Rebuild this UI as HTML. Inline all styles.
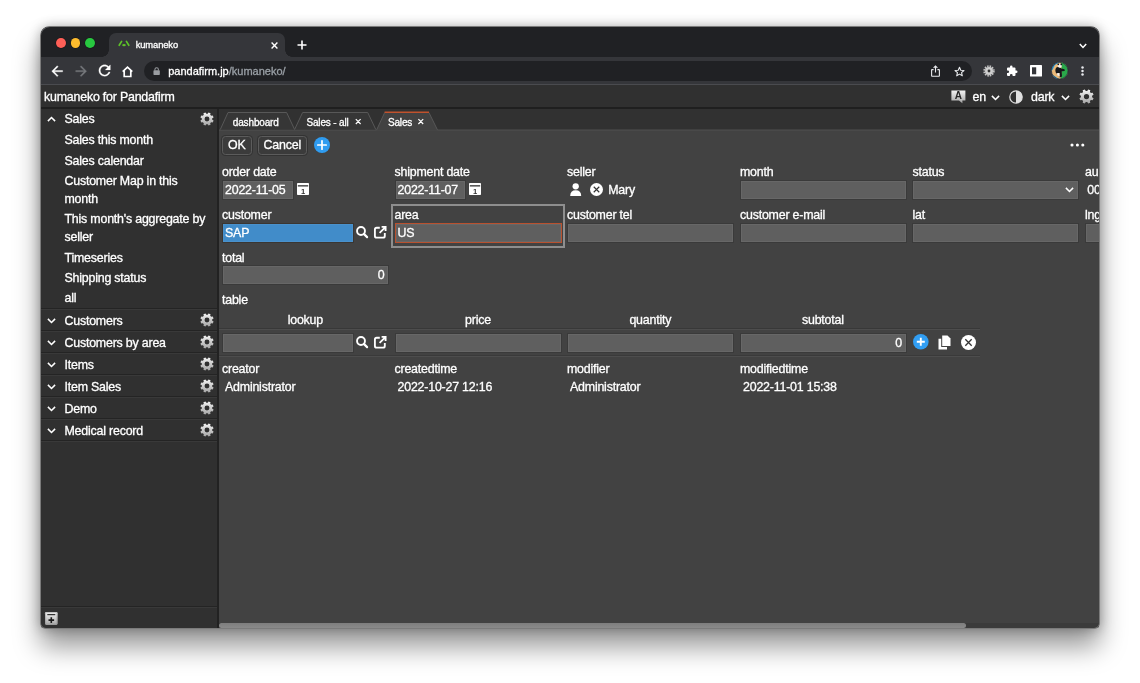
<!DOCTYPE html>
<html lang="en">
<head>
<meta charset="utf-8">
<title>kumaneko</title>
<style>
*{box-sizing:border-box;margin:0;padding:0}
html,body{width:1140px;height:683px;overflow:hidden;background:#fff}
body{font-family:"Liberation Sans",sans-serif;font-size:12.400px;color:#fff;position:relative;-webkit-text-stroke:0.3px currentColor}
.abs{position:absolute}
#win{will-change:transform;position:absolute;left:40px;top:26px;width:1060px;height:603px;border-radius:10px 10px 6px 6px;background:#424242;overflow:hidden}
#inner{position:absolute;left:1px;top:1px;width:1058px;height:601px}
#ring{position:absolute;left:0;top:0;width:1060px;height:603px;border-radius:10px 10px 6px 6px;box-shadow:inset 0 0 0 1px rgba(255,255,255,.3);pointer-events:none}
#shadow{position:absolute;left:40px;top:26px;width:1060px;height:603px;border-radius:10px 10px 6px 6px;
  box-shadow:0 18px 27px rgba(0,0,0,.40),0 0 12px rgba(0,0,0,.28)}
/* chrome */
#tabstrip{position:absolute;left:0;top:0;width:100%;height:30px;background:#202124}
#toolbar{position:absolute;left:0;top:30px;width:100%;height:28px;background:#35363a;border-bottom:1px solid #4a4b4f}
.tl{position:absolute;top:10.800px;width:9.800px;height:9.800px;border-radius:50%;box-shadow:0 0 0 0.500px rgba(0,0,0,.35)}
#ctab{position:absolute;left:67.700px;top:6px;width:176.300px;height:24px;background:#35363a;border-radius:7px 7px 0 0}
#ctab:before,#ctab:after{content:"";position:absolute;bottom:0;width:7px;height:7px;background:radial-gradient(circle at 0 0,transparent 6.5px,#35363a 7px)}
#ctab:before{left:-7px}
#ctab:after{right:-7px;background:radial-gradient(circle at 100% 0,transparent 6.5px,#35363a 7px)}
#urlbar{position:absolute;left:102.700px;top:4px;width:828.300px;height:20px;border-radius:10px;background:#202124}
.ctxt{font-size:9.400px;color:#fff;letter-spacing:-0.12px;white-space:nowrap}
.t{white-space:nowrap;line-height:16px;letter-spacing:-0.2px}
/* app */
#apphead{position:absolute;left:0;top:58px;width:100%;height:24px;background:#303030;border-bottom:2px solid #1f1f1f}
#side{position:absolute;left:0;top:82px;width:176px;height:519px;background:#303030}
#sep{position:absolute;left:176px;top:82px;width:2px;height:519px;background:#222}
#main{position:absolute;left:178px;top:82px;width:880px;height:519px;background:#424242;overflow:hidden}
.srow{position:absolute;left:0;width:176px;height:22px;border-top:1px solid #242424;box-shadow:inset 0 1px 0 #393939}
.stxt{position:absolute;left:23.5px;white-space:nowrap;line-height:16px}
.lbl{position:absolute;white-space:nowrap;line-height:16px}
.inp{position:absolute;height:20px;background:#5f5f5f;border:1px solid #3a3a3a;box-shadow:inset 0 0 0 1px rgba(255,255,255,.05);line-height:18px;padding:0 2px;white-space:nowrap}
svg{position:absolute;overflow:visible}
.tab{font-size:10px;line-height:12px;letter-spacing:-0.15px;white-space:nowrap}
.btn{position:absolute;height:18.500px;border:1px solid #5c5c5c;border-radius:3.500px;background:#3b3b3b;box-shadow:0 0 0 1px rgba(0,0,0,.22);text-align:center;line-height:16.500px;letter-spacing:-0.2px;white-space:nowrap}
</style>
</head>
<body>
<div id="shadow"></div>
<div id="win">
<div id="inner">
  <!-- ===== browser tab strip ===== -->
  <div id="tabstrip">
    <div class="tl" style="left:15px;background:#fe5f57"></div>
    <div class="tl" style="left:29.600px;background:#febc2e"></div>
    <div class="tl" style="left:44.400px;background:#28c840"></div>
    <div id="ctab">
      <svg style="left:9.200px;top:7.200px" width="12" height="7" viewBox="0 0 12 7"><path d="M1.2 5.3 L3.6 1.4 M8.400 1.400 L10.800 5.300" stroke="#5dc229" stroke-width="1.700" stroke-linecap="round" fill="none"/><ellipse cx="6" cy="5.200" rx="1.800" ry="1.100" fill="#5dc229"/></svg>
      <span class="abs ctxt" style="left:27px;top:6.300px;line-height:12px">kumaneko</span>
      <svg style="left:162.700px;top:8.500px" width="7" height="7" viewBox="0 0 7 7"><path d="M0.6 0.6 L6.4 6.4 M6.4 0.6 L0.6 6.4" stroke="#fff" stroke-width="1.4" fill="none"/></svg>
    </div>
    <svg style="left:255.5px;top:13px" width="10" height="10" viewBox="0 0 10 10"><path d="M5 0.5 V9.5 M0.5 5 H9.5" stroke="#fff" stroke-width="1.6" fill="none"/></svg>
    <svg style="left:1037.5px;top:15.5px" width="8" height="6" viewBox="0 0 8 6"><path d="M0.8 1 L4 4.4 L7.2 1" stroke="#fff" stroke-width="1.5" fill="none"/></svg>
  </div>
  <!-- ===== browser toolbar ===== -->
  <div id="toolbar">
    <svg style="left:7.820px;top:5.620px" width="16.350" height="16.350" viewBox="0 0 24 24"><path d="M20 11H7.830l5.590-5.590L12 4l-8 8 8 8 1.410-1.410L7.830 13H20v-2z" fill="#fff" stroke="#fff" stroke-width="0.500"/></svg>
    <svg style="left:31.870px;top:5.620px" width="16.350" height="16.350" viewBox="0 0 24 24"><path d="M12 4l-1.410 1.410L16.170 11H4v2h12.170l-5.580 5.590L12 20l8-8z" fill="#75777b" stroke="#75777b" stroke-width="0.500"/></svg>
    <svg style="left:54.900px;top:5.400px" width="17.200" height="17.200" viewBox="0 0 24 24"><path d="M17.650 6.350C16.200 4.900 14.210 4 12 4c-4.420 0-7.990 3.580-7.990 8s3.570 8 7.990 8c3.730 0 6.840-2.550 7.730-6h-2.080c-.820 2.330-3.040 4-5.650 4-3.310 0-6-2.690-6-6s2.690-6 6-6c1.660 0 3.140.690 4.220 1.780L13 11h7V4l-2.350 2.350z" fill="#fff" stroke="#fff" stroke-width="0.400"/></svg>
    <svg style="left:81.300px;top:8.600px" width="11" height="12" viewBox="0 0 11 12"><path d="M0.700 5.700 L5.500 1.200 L10.300 5.700 M2.200 4.600 V10.500 H8.800 V4.600" stroke="#fff" stroke-width="1.700" fill="none" stroke-linejoin="miter"/></svg>
    <div id="urlbar"></div>
    <svg style="left:112.300px;top:9.600px" width="7.300" height="8.300" viewBox="0 0 8 9"><rect x="0.5" y="3.6" width="7" height="5.2" rx="0.8" fill="#9a9da1"/><path d="M2.1 3.8 V2.6 A1.9 1.9 0 0 1 5.9 2.6 V3.8" stroke="#9a9da1" stroke-width="1.1" fill="none"/></svg>
    <span class="abs" style="left:127.200px;top:7.500px;line-height:13px;font-size:11px;white-space:nowrap">pandafirm.jp<span style="color:#9aa0a6">/kumaneko/</span></span>
    <!-- share -->
    <svg style="left:890px;top:8px" width="9" height="12" viewBox="0 0 9 12"><path d="M2.6 4.6 H1 Q0.6 4.6 0.6 5 V10.8 Q0.6 11.2 1 11.2 H8 Q8.4 11.2 8.4 10.8 V5 Q8.4 4.6 8 4.6 H6.4" stroke="#e8eaed" stroke-width="1.1" fill="none"/><path d="M4.5 7.6 V1.2 M2.6 2.9 L4.5 1 L6.4 2.9" stroke="#e8eaed" stroke-width="1.1" fill="none"/></svg>
    <!-- star -->
    <svg style="left:912.5px;top:8.5px" width="11" height="11" viewBox="0 0 24 24"><path d="M12 2.8 L14.8 9.3 L21.8 9.9 L16.5 14.5 L18.1 21.4 L12 17.7 L5.9 21.4 L7.5 14.5 L2.2 9.9 L9.2 9.3 Z" stroke="#e8eaed" stroke-width="2.4" fill="none" stroke-linejoin="round"/></svg>
    <!-- ext gear -->
    <svg style="left:941.7px;top:7.8px" width="12" height="12" viewBox="0 0 12 12"><circle cx="6" cy="6" r="4.700" fill="none" stroke="#c4c4c4" stroke-width="2" stroke-dasharray="1.500 0.960"/><circle cx="6" cy="6" r="4" fill="#cfcfcf"/><circle cx="6" cy="6" r="1.400" fill="#333"/></svg>
    <!-- puzzle -->
    <svg style="left:965.4px;top:7.6px" width="12" height="12" viewBox="0 0 24 24"><path d="M20.5 11H19V7a2 2 0 0 0-2-2h-4V3.5a2.5 2.5 0 0 0-5 0V5H4a2 2 0 0 0-2 2v3.8h1.5a2.7 2.7 0 0 1 0 5.4H2V20a2 2 0 0 0 2 2h3.8v-1.5a2.7 2.7 0 0 1 5.4 0V22H17a2 2 0 0 0 2-2v-4h1.500a2.500 2.500 0 0 0 0-5z" fill="#fff"/></svg>
    <!-- side panel -->
    <svg style="left:988.5px;top:7.8px" width="12" height="11.600" viewBox="0 0 12 11.600"><rect x="0" y="0" width="12" height="11.600" rx="0.600" fill="#fff"/><rect x="2" y="2.300" width="4.200" height="7" fill="#35363a"/></svg>
    <!-- avatar -->
    <svg style="left:1009.5px;top:4.9px" width="17.400" height="17.400" viewBox="0 0 17.400 17.400"><defs><clipPath id="av"><circle cx="8.700" cy="8.700" r="8.400"/></clipPath></defs><g clip-path="url(#av)"><rect width="17.400" height="17.400" fill="#e9b878"/><path d="M0 0 H9 L4 3 L1.500 8 L0 9 Z" fill="#2a9bd8"/><path d="M10 0 H17.400 V17.400 H9.500 L11 11 Z" fill="#2aa84a"/><path d="M0 12 L5 15 L8 17.400 H0 Z" fill="#2a9bd8"/><path d="M4.500 7 Q5 4.500 8 5 L10.500 6.500 L13.500 7.200 L13.800 9 L10.800 9.300 L11 14.500 L8.800 15.800 L8.500 11 L5.500 11.500 Q4 10 4.500 7 Z" fill="#15171a"/><circle cx="8.800" cy="3.700" r="2" fill="#f3f3f3"/><circle cx="7.300" cy="2.300" r="0.900" fill="#15171a"/><circle cx="10.300" cy="2.400" r="0.900" fill="#15171a"/><path d="M6 11.300 L8.400 11 L8.600 14 L6.500 13.500 Z" fill="#f3f3f3"/></g><circle cx="8.700" cy="8.700" r="8.300" fill="none" stroke="#1d2a3a" stroke-width="0.700"/></svg>
    <!-- kebab -->
    <svg style="left:1039.9px;top:9.2px" width="3" height="10" viewBox="0 0 3 10"><circle cx="1.500" cy="1.400" r="1.250" fill="#e8eaed"/><circle cx="1.500" cy="5" r="1.250" fill="#e8eaed"/><circle cx="1.500" cy="8.600" r="1.250" fill="#e8eaed"/></svg>
  </div>
  <!-- ===== app header ===== -->
  <div id="apphead">
    <span class="abs t" style="left:3px;top:3.500px">kumaneko for Pandafirm</span>
    <!-- translate icon -->
    <svg style="left:909.500px;top:4.800px" width="14.800" height="13.500" viewBox="0 0 14.800 13.500"><path d="M0.400 0.400 H14.400 V10.400 H11.400 V13.200 L8 10.400 H0.400 Z" fill="url(#gg)"/><text x="7.400" y="9.300" font-family="Liberation Sans, sans-serif" font-size="10" font-weight="bold" text-anchor="middle" fill="#262626" style="-webkit-text-stroke:0">A</text></svg>
    <span class="abs t" style="left:931.500px;top:3.500px">en</span>
    <svg class="chev" style="left:949.500px;top:9.500px" width="9" height="6" viewBox="0 0 9 6"><path d="M0.900 0.900 L4.500 4.500 L8.100 0.900" stroke="#fff" stroke-width="1.500" fill="none"/></svg>
    <svg style="left:968px;top:5px" width="14" height="14" viewBox="0 0 14 14"><circle cx="7" cy="7" r="6.200" fill="none" stroke="#e0e0e0" stroke-width="1.200"/><path d="M7 0.800 A6.200 6.200 0 0 1 7 13.200 Z" fill="#e0e0e0"/></svg>
    <span class="abs t" style="left:990px;top:3.500px">dark</span>
    <svg class="chev" style="left:1019.800px;top:9.500px" width="9" height="6" viewBox="0 0 9 6"><path d="M0.900 0.900 L4.500 4.500 L8.100 0.900" stroke="#fff" stroke-width="1.500" fill="none"/></svg>
    <svg style="left:1037.800px;top:4.300px" width="15" height="15" viewBox="0 0 24 24"><use href="#gear" fill="url(#gg)"/></svg>
  </div>
  <div id="side">
    <svg class="chev" style="left:6px;top:6.5px" width="9" height="6" viewBox="0 0 9 6"><path d="M0.900 5.100 L4.500 1.500 L8.100 5.100" stroke="#fff" stroke-width="1.500" fill="none"/></svg>
    <span class="stxt t" style="top:2px">Sales</span>
    <svg style="left:159px;top:2.5px" width="14" height="14" viewBox="0 0 24 24"><use href="#gear" fill="url(#gg)"/></svg>
    <span class="stxt t" style="top:23px">Sales this month</span>
    <span class="stxt t" style="top:44px">Sales calendar</span>
    <span class="stxt t" style="top:64px">Customer Map in this</span>
    <span class="stxt t" style="top:82px">month</span>
    <span class="stxt t" style="top:102px">This month's aggregate by</span>
    <span class="stxt t" style="top:120px">seller</span>
    <span class="stxt t" style="top:141px">Timeseries</span>
    <span class="stxt t" style="top:161px">Shipping status</span>
    <span class="stxt t" style="top:181px">all</span>
    <div class="srow" style="top:199.0px">
      <svg class="chev" style="left:6px;top:8.500px" width="9" height="6" viewBox="0 0 9 6"><path d="M0.900 0.900 L4.500 4.500 L8.100 0.900" stroke="#fff" stroke-width="1.500" fill="none"/></svg>
      <span class="stxt t" style="top:3.500px">Customers</span>
      <svg style="left:159px;top:3.500px" width="14" height="14" viewBox="0 0 24 24"><use href="#gear" fill="url(#gg)"/></svg>
    </div>
    <div class="srow" style="top:221.0px">
      <svg class="chev" style="left:6px;top:8.500px" width="9" height="6" viewBox="0 0 9 6"><path d="M0.900 0.900 L4.500 4.500 L8.100 0.900" stroke="#fff" stroke-width="1.500" fill="none"/></svg>
      <span class="stxt t" style="top:3.500px">Customers by area</span>
      <svg style="left:159px;top:3.500px" width="14" height="14" viewBox="0 0 24 24"><use href="#gear" fill="url(#gg)"/></svg>
    </div>
    <div class="srow" style="top:243.0px">
      <svg class="chev" style="left:6px;top:8.500px" width="9" height="6" viewBox="0 0 9 6"><path d="M0.900 0.900 L4.500 4.500 L8.100 0.900" stroke="#fff" stroke-width="1.500" fill="none"/></svg>
      <span class="stxt t" style="top:3.500px">Items</span>
      <svg style="left:159px;top:3.500px" width="14" height="14" viewBox="0 0 24 24"><use href="#gear" fill="url(#gg)"/></svg>
    </div>
    <div class="srow" style="top:265.0px">
      <svg class="chev" style="left:6px;top:8.500px" width="9" height="6" viewBox="0 0 9 6"><path d="M0.900 0.900 L4.500 4.500 L8.100 0.900" stroke="#fff" stroke-width="1.500" fill="none"/></svg>
      <span class="stxt t" style="top:3.500px">Item Sales</span>
      <svg style="left:159px;top:3.500px" width="14" height="14" viewBox="0 0 24 24"><use href="#gear" fill="url(#gg)"/></svg>
    </div>
    <div class="srow" style="top:287.0px">
      <svg class="chev" style="left:6px;top:8.500px" width="9" height="6" viewBox="0 0 9 6"><path d="M0.900 0.900 L4.500 4.500 L8.100 0.900" stroke="#fff" stroke-width="1.500" fill="none"/></svg>
      <span class="stxt t" style="top:3.500px">Demo</span>
      <svg style="left:159px;top:3.500px" width="14" height="14" viewBox="0 0 24 24"><use href="#gear" fill="url(#gg)"/></svg>
    </div>
    <div class="srow" style="top:309.0px">
      <svg class="chev" style="left:6px;top:8.500px" width="9" height="6" viewBox="0 0 9 6"><path d="M0.900 0.900 L4.500 4.500 L8.100 0.900" stroke="#fff" stroke-width="1.500" fill="none"/></svg>
      <span class="stxt t" style="top:3.500px">Medical record</span>
      <svg style="left:159px;top:3.500px" width="14" height="14" viewBox="0 0 24 24"><use href="#gear" fill="url(#gg)"/></svg>
    </div>
    <div class="srow" style="top:331.0px;height:2px"></div>
    <div class="srow" style="top:497px;height:2px"></div>
    <svg style="left:4.400px;top:502.800px" width="12.600" height="12.900" viewBox="0 0 12.600 12.900"><rect x="0" y="0" width="12.600" height="12.900" rx="1.300" fill="url(#gg)"/><rect x="0.600" y="0.600" width="11.400" height="11.700" rx="0.800" fill="none" stroke="#8a8a8a" stroke-width="0.500"/><rect x="2.300" y="2.100" width="8" height="1.100" fill="#1e1e1e"/><path d="M6.300 5.300 V10.900 M3.500 8.100 H9.100" stroke="#1a1a1a" stroke-width="1.600"/></svg>
  </div>
  <div id="sep"></div>
  <div id="main">
    <div class="abs" style="left:0;top:0;width:880px;height:20.500px;background:#313131"></div>
    <svg style="left:0;top:0" width="880" height="22" viewBox="219 109 880 22">
      <path d="M219 130 H1099" stroke="#505050" stroke-width="1"/>
      <path d="M220.300 129.500 L228 112.500 H286.600 L294.600 129.500" fill="#363636" stroke="#585858" stroke-width="1"/>
      <path d="M294.600 129.500 L302.600 112.500 H367.700 L375.800 129.500" fill="#363636" stroke="#585858" stroke-width="1"/>
      <path d="M376.500 130.600 L384.700 112.500 H428.900 L437.500 130.600 Z" fill="#424242"/>
      <path d="M376.700 129.800 L384.700 112.500 M428.900 112.500 L437.400 129.800" fill="none" stroke="#585858" stroke-width="1"/>
      <path d="M384.600 112.200 H429" stroke="#c0522d" stroke-width="1.500"/>
      <path d="M355.800 119.200 L360.600 124 M360.600 119.200 L355.800 124 M418.400 119.200 L423.200 124 M423.200 119.200 L418.400 124" stroke="#fff" stroke-width="1.200"/>
    </svg>
    <span class="abs tab" style="left:13.8px;top:7.500px">dashboard</span>
    <span class="abs tab" style="left:87.4px;top:7.500px">Sales - all</span>
    <span class="abs tab" style="left:168.9px;top:7.500px">Sales</span>
    <div class="btn" style="left:3px;top:27px;width:29.5px">OK</div>
    <div class="btn" style="left:38.8px;top:27px;width:49px">Cancel</div>
    <svg style="left:95px;top:28.3px" width="16" height="16" viewBox="0 0 16 16"><circle cx="8" cy="8" r="8" fill="#2f9cf0"/><path d="M8 3.800 V12.200 M3.800 8 H12.200" stroke="#fff" stroke-width="1.700" stroke-linecap="round"/></svg>
    <svg style="left:851.400px;top:34.300px" width="15" height="4" viewBox="0 0 15 4"><circle cx="2" cy="2" r="1.550" fill="#fff"/><circle cx="7.400" cy="2" r="1.550" fill="#fff"/><circle cx="12.800" cy="2" r="1.550" fill="#fff"/></svg>
    <span class="lbl t" style="left:3px;top:55.4px">order date</span>
    <span class="lbl t" style="left:175.5px;top:55.4px">shipment date</span>
    <span class="lbl t" style="left:348px;top:55.4px">seller</span>
    <span class="lbl t" style="left:521px;top:55.4px">month</span>
    <span class="lbl t" style="left:693.5px;top:55.4px">status</span>
    <span class="lbl t" style="left:866px;top:55.4px">au</span>
    <div class="inp t" style="left:3px;top:71px;width:71.500px;">2022-11-05</div>
    <svg style="left:77.7px;top:74.3px" width="12" height="12" viewBox="0 0 12 12"><rect x="0" y="0" width="12" height="12" rx="0.800" fill="#fff"/><rect x="0.800" y="2.200" width="10.400" height="1.300" fill="#333"/><text x="6" y="10.500" font-family="Liberation Sans, sans-serif" font-size="7.600" font-weight="bold" text-anchor="middle" fill="#333">1</text></svg>
    <div class="inp t" style="left:175.5px;top:71px;width:71.500px;">2022-11-07</div>
    <svg style="left:250.2px;top:74.3px" width="12" height="12" viewBox="0 0 12 12"><rect x="0" y="0" width="12" height="12" rx="0.800" fill="#fff"/><rect x="0.800" y="2.200" width="10.400" height="1.300" fill="#333"/><text x="6" y="10.500" font-family="Liberation Sans, sans-serif" font-size="7.600" font-weight="bold" text-anchor="middle" fill="#333">1</text></svg>
    <svg style="left:351.300px;top:73.700px" width="11.400" height="13.300" viewBox="0 0 11.400 13.300"><circle cx="5.700" cy="3.300" r="3.150" fill="#fff"/><path d="M0.200 13.100 Q0.200 7.300 5.700 7.300 Q11.200 7.300 11.200 13.100 Z" fill="#fff"/></svg>
    <svg style="left:371.2px;top:74.1px" width="13" height="13" viewBox="0 0 16 16"><circle cx="8" cy="8" r="8" fill="#fff"/><path d="M4.600 4.600 L11.400 11.400 M11.400 4.600 L4.600 11.400" stroke="#333" stroke-width="1.400"/></svg>
    <span class="lbl t" style="left:389.2px;top:72.7px">Mary</span>
    <div class="inp t" style="left:520.5px;top:71px;width:167px;"></div>
    <div class="inp t" style="left:693px;top:71px;width:167px;"></div>
    <svg class="chev" style="left:845.5px;top:78.3px" width="9" height="6" viewBox="0 0 9 6"><path d="M0.900 0.900 L4.500 4.500 L8.100 0.900" stroke="#fff" stroke-width="1.500" fill="none"/></svg>
    <span class="lbl t" style="left:868.3px;top:72.7px">00</span>
    <span class="lbl t" style="left:3px;top:98px">customer</span>
    <span class="lbl t" style="left:175.5px;top:98px">area</span>
    <span class="lbl t" style="left:348px;top:98px">customer tel</span>
    <span class="lbl t" style="left:521px;top:98px">customer e-mail</span>
    <span class="lbl t" style="left:693.5px;top:98px">lat</span>
    <span class="lbl t" style="left:866px;top:98px">lng</span>
    <div class="abs" style="left:172px;top:95px;width:174px;height:44px;border:2px solid #8e8e8e"></div>
    <div class="inp t" style="left:3px;top:114px;width:131.500px;background:#418cc9;border-color:#3a3632">SAP</div>
    <svg style="left:137px;top:117px" width="13" height="13" viewBox="0 0 13 13"><circle cx="5" cy="5" r="3.950" fill="none" stroke="#fff" stroke-width="1.900"/><path d="M8.100 8.100 L11.100 11.100" stroke="#fff" stroke-width="2.200" stroke-linecap="round"/></svg>
    <svg style="left:154.700px;top:116.500px" width="13" height="13" viewBox="0 0 13 13"><path d="M5.800 1.700 H2.600 Q0.900 1.700 0.900 3.400 V9.900 Q0.900 11.600 2.600 11.600 H9.100 Q10.800 11.600 10.800 9.900 V6.900" fill="none" stroke="#fff" stroke-width="1.850"/><path d="M5.600 6.900 L11.200 1.300 M7.600 0.900 H11.600 V4.900" fill="none" stroke="#fff" stroke-width="1.850"/></svg>
    <div class="inp t" style="left:175.5px;top:114px;width:167px;border-color:#b9512f">US</div>
    <div class="inp t" style="left:348px;top:114px;width:167px;"></div>
    <div class="inp t" style="left:520.5px;top:114px;width:167px;"></div>
    <div class="inp t" style="left:693px;top:114px;width:167px;"></div>
    <div class="inp t" style="left:865.5px;top:114px;width:60px;"></div>
    <span class="lbl t" style="left:3px;top:140.5px">total</span>
    <div class="inp t" style="left:3px;top:156px;width:167px;text-align:right;padding-right:3.500px">0</div>
    <span class="lbl t" style="left:3px;top:183px">table</span>
    <span class="lbl t" style="left:36.3px;top:203.2px;width:100px;text-align:center">lookup</span>
    <span class="lbl t" style="left:209px;top:203.2px;width:100px;text-align:center">price</span>
    <span class="lbl t" style="left:381.3px;top:203.2px;width:100px;text-align:center">quantity</span>
    <span class="lbl t" style="left:553.9px;top:203.2px;width:100px;text-align:center">subtotal</span>
    <div class="abs" style="left:0;top:219px;width:761px;height:2px;background:linear-gradient(#383838 50%,#4d4d4d 50%)"></div>
    <div class="abs" style="left:0;top:246px;width:761px;height:2px;background:linear-gradient(#3a3a3a 50%,#4d4d4d 50%)"></div>
    <div class="inp t" style="left:3px;top:224px;width:131.500px;"></div>
    <svg style="left:137px;top:227px" width="13" height="13" viewBox="0 0 13 13"><circle cx="5" cy="5" r="3.950" fill="none" stroke="#fff" stroke-width="1.900"/><path d="M8.100 8.100 L11.100 11.100" stroke="#fff" stroke-width="2.200" stroke-linecap="round"/></svg>
    <svg style="left:154.700px;top:226.800px" width="13" height="13" viewBox="0 0 13 13"><path d="M5.800 1.700 H2.600 Q0.900 1.700 0.900 3.400 V9.900 Q0.900 11.600 2.600 11.600 H9.100 Q10.800 11.600 10.800 9.900 V6.900" fill="none" stroke="#fff" stroke-width="1.850"/><path d="M5.600 6.900 L11.200 1.300 M7.600 0.900 H11.600 V4.900" fill="none" stroke="#fff" stroke-width="1.850"/></svg>
    <div class="inp t" style="left:175.5px;top:224px;width:167px;"></div>
    <div class="inp t" style="left:348px;top:224px;width:167px;"></div>
    <div class="inp t" style="left:520.5px;top:224px;width:167px;text-align:right;padding-right:3.500px">0</div>
    <svg style="left:694.300px;top:225.300px" width="15.600" height="15.600" viewBox="0 0 16 16"><circle cx="8" cy="8" r="8" fill="#319ef3"/><path d="M8 3.900 V12.100 M3.900 8 H12.100" stroke="#fff" stroke-width="1.950"/></svg>
    <svg style="left:719px;top:225.6px" width="13" height="15" viewBox="0 0 13 15"><path d="M4.200 0.500 H9.500 L12.500 3.500 V11 H4.200 Z" fill="#fff"/><path d="M0.500 3.800 H3.200 V12 H9 V14.500 H0.500 Z" fill="#fff"/></svg>
    <svg style="left:741.6px;top:225.6px" width="15" height="15" viewBox="0 0 16 16"><circle cx="8" cy="8" r="8" fill="#fff"/><path d="M4.600 4.600 L11.400 11.400 M11.400 4.600 L4.600 11.400" stroke="#333" stroke-width="1.400"/></svg>
    <span class="lbl t" style="left:3px;top:252.2px">creator</span>
    <span class="lbl t" style="left:175.5px;top:252.2px">createdtime</span>
    <span class="lbl t" style="left:348px;top:252.2px">modifier</span>
    <span class="lbl t" style="left:521px;top:252.2px">modifiedtime</span>
    <span class="lbl t" style="left:6px;top:269.6px">Administrator</span>
    <span class="lbl t" style="left:178.5px;top:269.6px">2022-10-27 12:16</span>
    <span class="lbl t" style="left:351px;top:269.6px">Administrator</span>
    <span class="lbl t" style="left:524px;top:269.6px">2022-11-01 15:38</span>
    <div class="abs" style="left:0;top:513.5px;width:880px;height:6px;background:#3b3b3b"></div>
    <div class="abs" style="left:0;top:514px;width:747px;height:5px;background:linear-gradient(#7e7e7e,#8a8a8a);border-radius:3px"></div>
  </div>
</div>
<div id="ring"></div>
</div>
<svg width="0" height="0" style="position:absolute"><defs>
<path id="gear" fill-rule="evenodd" d="M13.20 3.08 L14.62 0.70 L18.14 2.16 L17.46 4.85 L19.15 6.54 L21.84 5.86 L23.30 9.38 L20.92 10.80 L20.92 13.20 L23.30 14.62 L21.84 18.14 L19.15 17.46 L17.46 19.15 L18.14 21.84 L14.62 23.30 L13.20 20.92 L10.80 20.92 L9.38 23.30 L5.86 21.84 L6.54 19.15 L4.85 17.46 L2.16 18.14 L0.70 14.62 L3.08 13.20 L3.08 10.80 L0.70 9.38 L2.16 5.86 L4.85 6.54 L6.54 4.85 L5.86 2.16 L9.38 0.70 L10.80 3.08 Z M7.80 12.00 a4.20 4.20 0 1 0 8.40 0 a4.20 4.20 0 1 0 -8.40 0 Z"/>
<linearGradient id="gg" x1="0" y1="0" x2="0" y2="1"><stop offset="0" stop-color="#f4f4f4"/><stop offset="1" stop-color="#a4a4a4"/></linearGradient>
</defs></svg>
</body>
</html>
